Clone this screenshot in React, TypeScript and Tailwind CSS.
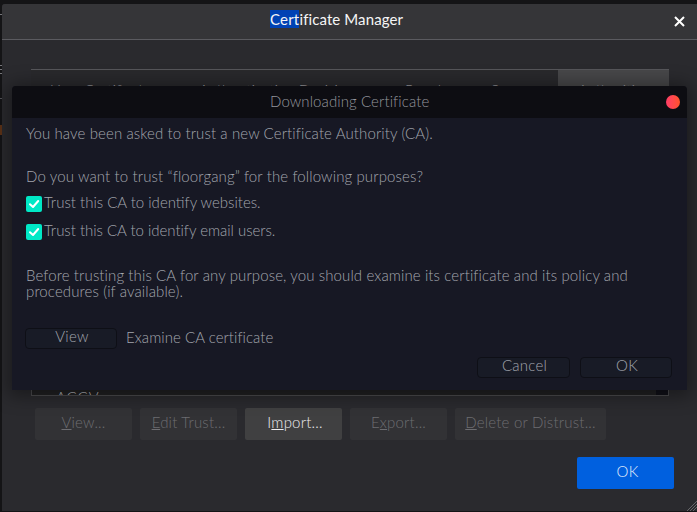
import type { ReactNode } from "react";

function Check() {
  return (
    <span className="flex h-4 w-4 shrink-0 items-center justify-center rounded-[2px] bg-[#00e8c6]">
      <svg width="16" height="16" viewBox="0 0 16 16" fill="none">
        <path d="M4 8.2 L7 11 L12.2 5" stroke="#fff" strokeWidth="2" strokeLinecap="round" strokeLinejoin="round" />
      </svg>
    </span>
  );
}

function Action({ children, className }: { children: ReactNode; className: string }) {
  return <button className={`h-8 shrink-0 rounded-[2px] pb-1 tracking-[0.2px] whitespace-nowrap ${className}`}>{children}</button>;
}

function DialogButton({ children, className }: { children: ReactNode; className: string }) {
  return (
    <button className={`flex h-[21px] items-center justify-center rounded-[4px] border border-[#0e0f16] bg-[#181b26] pb-1 pl-0.5 tracking-[0.25px] ${className}`}>
      {children}
    </button>
  );
}

function TrustDialog() {
  return (
    <section className="absolute top-[86px] left-3 flex h-[304px] w-[675px] flex-col overflow-hidden rounded-t-[4px] bg-[#171824] text-[#a3a6ae] shadow-[0_2px_18px_4px_rgba(0,0,0,0.38)]">
      <header className="flex h-8 shrink-0 items-center bg-[#0d0d12] pr-[7px]">
        <h2 className="flex-1 pb-0.5 pl-[258px] text-[15px] leading-5 tracking-[0.1px] text-[#94969d]">Downloading Certificate</h2>
        <span className="h-3.5 w-3.5 rounded-full bg-linear-to-r from-[#ff3d66] to-[#ff5226]" />
      </header>
      <div className="flex flex-1 flex-col pr-[15px] pl-3.5 whitespace-nowrap">
        <p className="mt-[7px] h-4 leading-4 tracking-[0.11px]">You have been asked to trust a new Certificate Authority (CA).</p>
        <p className="mt-[27px] h-4 leading-4 tracking-[0.12px]">Do you want to trust “floorgang” for the following purposes?</p>
        <label className="mt-3 flex h-4 items-center gap-0.5 leading-4"><Check /><span className="pb-1">Trust this CA to identify websites.</span></label>
        <label className="mt-3 flex h-4 items-center gap-0.5 leading-4"><Check /><span className="pb-1 tracking-[-0.02px]">Trust this CA to identify email users.</span></label>
        <p className="mt-[27px] h-8 leading-4 tracking-[0.11px]">
          Before trusting this CA for any purpose, you should examine its certificate and its policy and<br />procedures (if available).
        </p>
        <div className="mt-[29px] -ml-px flex items-center gap-[9px]">
          <DialogButton className="w-[92px]">View</DialogButton>
          <span className="pb-[3px] leading-4 tracking-[0.05px]">Examine CA certificate</span>
        </div>
        <div className="mt-2 flex justify-end gap-2.5">
          <DialogButton className="w-[93px]">Cancel</DialogButton>
          <DialogButton className="w-[92px]">OK</DialogButton>
        </div>
      </div>
    </section>
  );
}

export default function App() {
  return (
    <div className="relative flex h-[512px] w-[697px] overflow-hidden bg-[#141416] pt-1 font-['Lato','Open_Sans',sans-serif] text-[15px] font-light">
      <aside className="flex w-0.5 shrink-0 flex-col overflow-hidden text-[#77777b]">
        <span className="mt-2.5 h-px bg-[#77777b]" />
        <span className="mt-[50px] h-px bg-[#77777b]" />
        <span className="mt-[3px] h-px bg-[#77777b]" />
        <span className="mt-[3px] h-px bg-[#77777b]" />
        <span className="mt-6 h-px bg-[#55555a]" />
        <span className="mt-[26px] h-2.5 bg-[#5c3216]" />
      </aside>
      <main className="flex h-[507px] flex-1 flex-col overflow-hidden rounded-tl-[3px] bg-[#2a2a2e]">
        <header className="flex h-9 shrink-0 items-center border-b border-[#5b5b60] bg-[#353538] pr-3 text-[#f5f5f6]">
          <h1 className="flex-1 pb-[5px] pl-[268px] text-[15px] leading-4 font-normal tracking-[0.1px]"><span className="bg-[#0042b4] tracking-[0.2px]">Cert</span>ificate Manager</h1>
          <svg width="11" height="11" viewBox="0 0 11 11" stroke="#fff" strokeWidth="2"><path d="M1 1 L10 10 M10 1 L1 10" /></svg>
        </header>
        <div className="mt-[29px] mr-7 ml-[29px] flex h-[327px] shrink-0 flex-col">
          <nav className="flex h-9 shrink-0 border-t border-[#56565a] bg-[#29292c] leading-5 whitespace-nowrap text-[#a0a0a4]">
            <span className="w-[150px] pt-2.5 pl-5">Your Certificates</span>
            <span className="w-[224px] pt-2.5 pl-[18px]">Authentication Decisions</span>
            <span className="w-[86px] pt-2.5">People</span>
            <span className="w-[67px] pt-2.5">Servers</span>
            <span className="flex-1 bg-[#474749] pt-2.5 text-center">Authorities</span>
          </nav>
          <div className="flex flex-1 items-end justify-between border border-t-0 border-[#4a4a4d] bg-[#202022]">
            <span className="ml-6 h-1 overflow-hidden leading-[12px] tracking-[1px] text-[#bbbbbf]">ACCV</span>
            <span className="h-5 w-3 bg-[#101018]" />
          </div>
        </div>
        <div className="mt-3 ml-[33px] flex shrink-0 gap-2 text-[#6d6d71]">
          <Action className="w-[97px] bg-[#323235]"><u>V</u>iew...</Action>
          <Action className="w-[97px] bg-[#323235]"><u>E</u>dit Trust...</Action>
          <Action className="w-[97px] bg-[#404041] pl-[3px] text-[#ededf0]">I<u>m</u>port...</Action>
          <Action className="w-[97px] bg-[#323235]">E<u>x</u>port...</Action>
          <Action className="w-[151px] bg-[#323235]"><u>D</u>elete or Distrust...</Action>
        </div>
        <footer className="mt-[17px] flex justify-end pr-[23px]">
          <Action className="w-[97px] bg-[#0060df] pl-1 text-[#e2ecfb]">OK</Action>
        </footer>
        <svg className="mt-3 -mb-px self-end" width="10" height="10" viewBox="0 0 10 10" stroke="#77777a" strokeWidth="0.8">
          <path d="M0 10 L10 0 M3 10 L10 3 M6 10 L10 6" />
        </svg>
      </main>
      <TrustDialog />
    </div>
  );
}
